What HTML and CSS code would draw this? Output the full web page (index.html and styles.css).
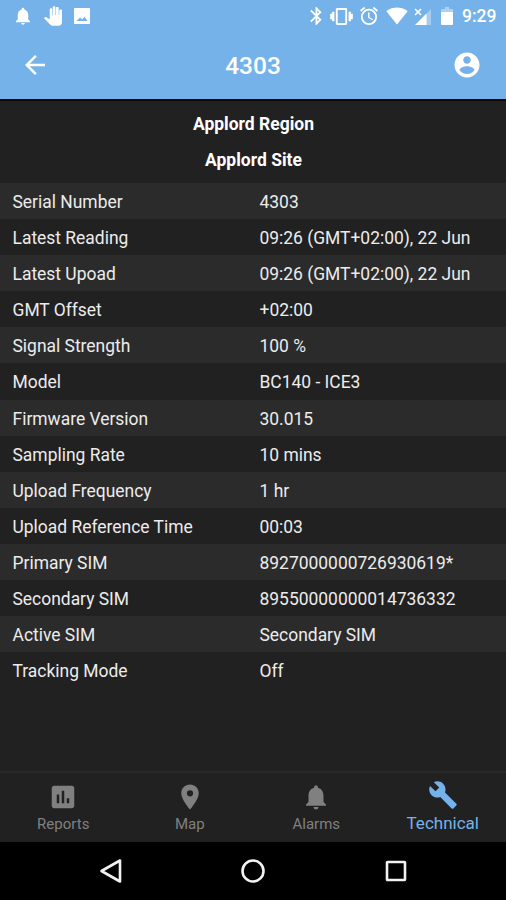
FILE: index.html
```html
<!DOCTYPE html>
<html lang="en">
<head>
<meta charset="utf-8">
<title>4303</title>
<link rel="stylesheet" href="styles.css">
</head>
<body>
<div class="screen">
  <header class="header">
    <div class="status">
      <svg class="s-bell" viewBox="4 2 16 20"><path d="M12 22c1.1 0 2-.9 2-2h-4c0 1.1.9 2 2 2zm6-6v-5c0-3.07-1.64-5.64-4.5-6.32V4c0-.83-.67-1.5-1.5-1.5s-1.5.67-1.5 1.5v.68C7.63 5.36 6 7.92 6 11v5l-2 2v1h16v-1l-2-2z"/></svg>
      <svg class="s-hand" viewBox="1 0 22 24"><path d="M23 5.5V20c0 2.2-1.8 4-4 4h-7.3c-1.08 0-2.1-.43-2.85-1.19L1 14.83s1.26-1.23 1.3-1.25c.22-.19.49-.29.79-.29.22 0 .42.06.6.16.04.01 4.31 2.46 4.31 2.46V4c0-.83.67-1.5 1.5-1.5S11 3.17 11 4v7h.6V1.500c0-.83.67-1.500 1.700-1.500S15 .67 15 1.500V11h.6V2.500c0-.83.67-1.500 1.700-1.500s1.700.67 1.700 1.500V11h.6V5.500c0-.83.67-1.500 1.700-1.500s1.700.67 1.700 1.500z"/></svg>
      <svg class="s-photo" viewBox="0 0 16 16"><path fill-rule="evenodd" d="M1 0h14a1 1 0 0 1 1 1v14a1 1 0 0 1-1 1H1a1 1 0 0 1-1-1V1a1 1 0 0 1 1-1zM2.500 13h11l-3-4.300-2.300 2.800-2.200-2z"/></svg>
      <span class="spacer"></span>
      <svg class="s-bt" viewBox="5 2 13 20"><path d="M17.710 7.710L12 2h-1v7.590L6.410 5 5 6.410 10.590 12 5 17.590 6.410 19 11 14.410V22h1l5.710-5.710-4.300-4.290 4.300-4.290zM13 5.830l1.880 1.880L13 9.590V5.830zm1.880 10.460L13 18.170v-3.760l1.880 1.880z"/></svg>
      <svg class="s-vib" viewBox="0 3 24 18"><path d="M0 15h2V9H0v6zm2 2h2.500V7H2v10zm20-8v6h2V9h-2zm-2.500 8H22V7h-2.500v10zM16.500 3h-9C6.670 3 6 3.670 6 4.500v15c0 .83.67 1.500 1.500 1.500h9c.83 0 1.500-.67 1.500-1.500v-15c0-.83-.67-1.500-1.500-1.500zM16 19H8V5h8v14z"/></svg>
      <svg class="s-alarm" viewBox="2 2 20 20"><path d="M22 5.720l-4.600-3.860-1.290 1.530 4.600 3.860L22 5.720zM7.880 3.390L6.600 1.860 2 5.710l1.290 1.530 4.590-3.850zM12.500 8H11v6l4.750 2.850.75-1.230-4-2.370V8zM12 4a9 9 0 1 0 0 18 9 9 0 0 0 0-18zm0 16a7 7 0 1 1 0-14 7 7 0 0 1 0 14z"/></svg>
      <svg class="s-wifi" viewBox="0 3 24 18.500"><path d="M12.010 21.490L23.640 7c-.45-.34-4.930-4-11.640-4C5.280 3 .81 6.660.36 7l11.630 14.490.01.010.01-.01z"/></svg>
      <svg class="s-cell" viewBox="0 0 17 17"><path opacity=".35" d="M17 1v16H2z"/><path d="M12.500 5.500V17H1z"/><path class="cross" d="M1 1l6 6M7 1L1 7"/></svg>
      <svg class="s-batt" viewBox="0 0 12 18"><path opacity=".4" d="M4 0h4v2h3a1 1 0 0 1 1 1v3H0V3a1 1 0 0 1 1-1h3z"/><path d="M0 5h12v12a1 1 0 0 1-1 1H1a1 1 0 0 1-1-1z"/></svg>
      <span class="time">9:29</span>
    </div>
    <div class="bar">
      <svg class="icon" viewBox="0 0 24 24"><path d="M20 11H7.830l5.590-5.590L12 4l-8 8 8 8 1.410-1.410L7.830 13H20v-2z"/></svg>
      <h1>4303</h1>
      <svg class="icon" viewBox="0 0 24 24"><path d="M12 2C6.480 2 2 6.480 2 12s4.480 10 10 10 10-4.480 10-10S17.520 2 12 2zm0 3c1.660 0 3 1.340 3 3s-1.340 3-3 3-3-1.340-3-3 1.340-3 3-3zm0 14.200c-2.500 0-4.710-1.280-6-3.220.03-1.990 4-3.080 6-3.080 1.990 0 5.970 1.090 6 3.080-1.290 1.940-3.500 3.220-6 3.220z"/></svg>
    </div>
  </header>
  <main>
    <div class="place">Applord Region</div>
    <div class="place">Applord Site</div>
    <dl>
      <div><dt>Serial Number</dt><dd>4303</dd></div>
      <div><dt>Latest Reading</dt><dd>09:26 (GMT+02:00), 22 Jun</dd></div>
      <div><dt>Latest Upoad</dt><dd>09:26 (GMT+02:00), 22 Jun</dd></div>
      <div><dt>GMT Offset</dt><dd>+02:00</dd></div>
      <div><dt>Signal Strength</dt><dd>100 %</dd></div>
      <div><dt>Model</dt><dd>BC140 - ICE3</dd></div>
      <div><dt>Firmware Version</dt><dd>30.015</dd></div>
      <div><dt>Sampling Rate</dt><dd>10 mins</dd></div>
      <div><dt>Upload Frequency</dt><dd>1 hr</dd></div>
      <div><dt>Upload Reference Time</dt><dd>00:03</dd></div>
      <div><dt>Primary SIM</dt><dd>8927000000726930619*</dd></div>
      <div><dt>Secondary SIM</dt><dd>89550000000014736332</dd></div>
      <div><dt>Active SIM</dt><dd>Secondary SIM</dd></div>
      <div><dt>Tracking Mode</dt><dd>Off</dd></div>
    </dl>
  </main>
  <nav class="tabs">
    <a class="tab"><svg viewBox="0 0 24 24"><path d="M19 3H5c-1.100 0-2 .9-2 2v14c0 1.100.9 2 2 2h14c1.100 0 2-.9 2-2V5c0-1.100-.9-2-2-2zM9 17H7v-7h2v7zm4 0h-2V7h2v10zm4 0h-2v-4h2v4z"/></svg><span>Reports</span></a>
    <a class="tab"><svg viewBox="0 0 24 24"><path d="M12 2C8.130 2 5 5.130 5 9c0 5.250 7 13 7 13s7-7.750 7-13c0-3.870-3.130-7-7-7zm0 9.500a2.500 2.500 0 0 1 0-5 2.500 2.500 0 0 1 0 5z"/></svg><span>Map</span></a>
    <a class="tab"><svg viewBox="0 0 24 24"><path d="M12 22c1.100 0 2-.9 2-2h-4c0 1.100.9 2 2 2zm6-6v-5c0-3.070-1.640-5.640-4.500-6.320V4c0-.83-.67-1.500-1.500-1.500s-1.500.67-1.500 1.500v.68C7.630 5.360 6 7.920 6 11v5l-2 2v1h16v-1l-2-2z"/></svg><span>Alarms</span></a>
    <a class="tab active"><svg viewBox="0 0 24 24"><path d="M22.700 19l-9.100-9.100c.9-2.300.4-5-1.500-6.900-2-2-5-2.400-7.400-1.300L9 6 6 9 1.600 4.700C.4 7.100.9 10.100 2.900 12.100c1.900 1.900 4.600 2.400 6.900 1.500l9.100 9.100c.4.4 1 .4 1.400 0l2.300-2.300c.5-.4.5-1.100.1-1.400z"/></svg><span>Technical</span></a>
  </nav>
  <footer class="sysnav">
    <svg viewBox="0 0 28 28"><path d="M23 3.500v21L4.500 14z"/></svg>
    <svg viewBox="0 0 28 28"><circle cx="14" cy="14" r="10.500"/></svg>
    <svg viewBox="0 0 28 28"><rect x="5" y="5" width="18" height="18" rx=".5"/></svg>
  </footer>
</div>
</body>
</html>
```
FILE: styles.css
```css
* { box-sizing: border-box; }
body { margin: 0; background: #212121; font-family: Roboto, sans-serif; }
.screen { width: 506px; height: 900px; display: flex; flex-direction: column; overflow: hidden; color: #ececec; }
svg { display: block; flex: none; fill: currentColor; }

.header { height: 101px; flex: none; background: #76b2ea; border-bottom: 2px solid #080808; color: #fff; }
.status { height: 32px; display: flex; align-items: center; padding: 0 10px 0 16px; }
.s-bell { width: 14px; height: 18px; }
.s-hand { width: 18px; height: 20px; margin-left: 14px; }
.s-photo { width: 16px; height: 16px; margin-left: 12px; }
.spacer { flex: 1; }
.s-bt { width: 12px; height: 18px; margin-right: 8px; }
.s-vib { width: 23px; height: 17px; margin-right: 7px; }
.s-alarm { width: 18px; height: 18px; margin-right: 8px; }
.s-wifi { width: 22px; height: 18px; margin-right: 6px; }
.s-cell { width: 17px; height: 17px; margin-right: 10px; }
.s-batt { width: 12px; height: 18px; margin-right: 9px; }
.cross { fill: none; stroke: currentColor; stroke-width: 1.6; }
.time { width: 34px; font-size: 17.5px; font-weight: 500; line-height: 20px; white-space: nowrap; }
.bar { height: 66px; display: flex; align-items: center; justify-content: space-between; padding: 0 24px 0 20px; }
.icon { width: 30px; height: 30px; }
.bar h1 { margin: 0; font-size: 24.500px; font-weight: 500; line-height: 30px; padding: 2px 0 0 4px; }

main { flex: 1; padding-top: 5px; background: #212121; }
.place { height: 36px; line-height: 37px; text-align: center; font-size: 17.500px; font-weight: 700; color: #fff; padding-left: 1px; }
dl { margin: 5px 0 0; }
dl div { height: 36.100px; display: grid; grid-template-columns: 247px 1fr; padding-left: 12.500px; font-size: 17.450px; line-height: 38.500px; }
dl div:nth-child(odd) { background: #2b2b2b; }
dt, dd { margin: 0; white-space: nowrap; }

.tabs { height: 71px; flex: none; display: grid; grid-template-columns: repeat(4, 1fr); border-top: 2px solid #292929; background: #212121; color: #808080; }
.tab { display: flex; flex-direction: column; align-items: center; padding-top: 9px; font-size: 15px; line-height: 20px; }
.tab svg { width: 30px; height: 30px; }
.tab span { margin-top: 2px; }
.active { color: #76b2ea; padding-top: 7px; font-size: 17px; }
.active span { margin-top: 3px; }

.sysnav { height: 58px; flex: none; display: flex; justify-content: center; gap: 114.500px; align-items: center; background: #000; }
.sysnav svg { width: 28px; height: 28px; fill: none; stroke: #f2f2f2; stroke-width: 2.600; stroke-linejoin: round; }
```
